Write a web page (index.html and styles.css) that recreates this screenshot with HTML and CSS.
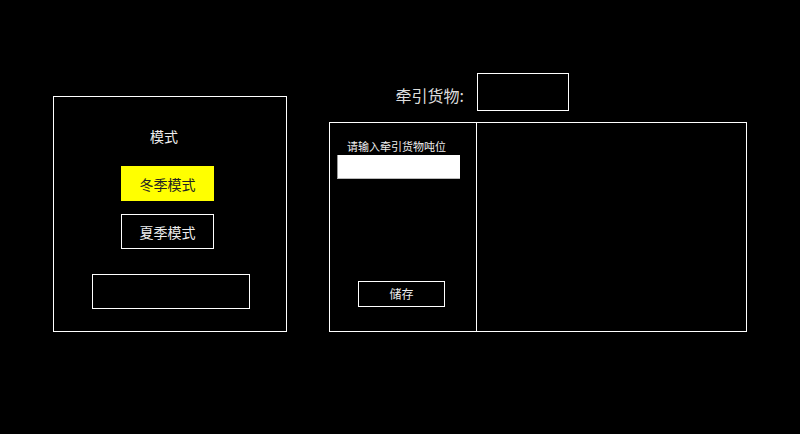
FILE: index.html
```html
<!DOCTYPE html>
<html lang="zh-CN">
<head>
<meta charset="utf-8">
<title>模式</title>
<link rel="stylesheet" href="styles.css">
</head>
<body>
<div class="page">
  <section class="mode-panel">
    <div class="mode-title">模式</div>
    <button class="mode-btn active">冬季模式</button>
    <button class="mode-btn summer">夏季模式</button>
    <div class="mode-output"></div>
  </section>
  <section class="cargo">
    <div class="cargo-head">
      <span class="cargo-label">牵引货物:</span>
      <div class="cargo-value"></div>
    </div>
    <div class="cargo-box">
      <div class="cargo-form">
        <label class="form-label" for="ton">请输入牵引货物吨位</label>
        <input class="form-input" id="ton" type="text">
        <button class="save-btn">储存</button>
      </div>
      <div class="cargo-view"></div>
    </div>
  </section>
</div>
</body>
</html>
```

FILE: styles.css
```css
* { box-sizing: border-box; }
html, body {
  margin: 0;
  padding: 0;
  background: #000;
}
body {
  width: 800px;
  height: 434px;
  overflow: hidden;
  font-family: "Noto Sans CJK SC", "Noto Sans", sans-serif;
  color: #fff;
}
.page {
  display: flex;
  align-items: flex-start;
  gap: 42px;
  padding-left: 53px;
}
.mode-panel {
  margin-top: 96px;
  width: 234px;
  height: 236px;
  border: 1px solid #fff;
  display: flex;
  flex-direction: column;
  align-items: flex-start;
  padding-top: 29px;
}
.mode-title {
  margin-left: 96px;
  font-size: 14px;
  line-height: 20px;
  color: #eee;
}
.mode-btn {
  font-family: inherit;
  font-size: 14px;
  width: 93px;
  height: 35px;
  padding: 0;
  margin-left: 67px;
  border: 1px solid #fff;
  background: #000;
  color: #eee;
  line-height: 1;
}
.mode-btn.active {
  margin-top: 20px;
  background: #ffff00;
  border-color: #ffff00;
  color: #222;
}
.mode-btn.summer {
  margin-top: 13px;
}
.mode-output {
  margin-top: 25px;
  margin-left: 38px;
  width: 158px;
  height: 35px;
  border: 1px solid #fff;
}
.cargo {
  margin-top: 73px;
  width: 418px;
}
.cargo-head {
  display: grid;
  grid-template-columns: 148px 92px;
  align-items: center;
}
.cargo-label {
  justify-self: end;
  padding-right: 13px;
  padding-top: 6px;
  font-size: 16px;
  line-height: 20px;
  color: #ddd;
}
.cargo-value {
  height: 38px;
  border: 1px solid #fff;
}
.cargo-box {
  margin-top: 11px;
  height: 210px;
  border: 1px solid #fff;
  display: grid;
  grid-template-columns: 147px 1fr;
}
.cargo-form {
  border-right: 1px solid #fff;
  display: flex;
  flex-direction: column;
  align-items: flex-start;
  padding: 17px 0 0 7px;
}
.form-label {
  margin-left: 10px;
  font-size: 11px;
  line-height: 13px;
  color: #eee;
}
.form-input {
  margin-top: 2px;
  width: 123px;
  height: 24px;
  border: 0;
  border-left: 1px solid #999;
  border-bottom: 1px solid #bbb;
  background: #fff;
  padding: 0;
  outline: none;
}
.save-btn {
  margin-top: 102px;
  margin-left: 21px;
  width: 87px;
  height: 26px;
  padding: 0;
  font-family: inherit;
  font-size: 12px;
  line-height: 1;
  background: #000;
  color: #eee;
  border: 1px solid #fff;
}
.cargo-view {
  min-height: 0;
}
```
